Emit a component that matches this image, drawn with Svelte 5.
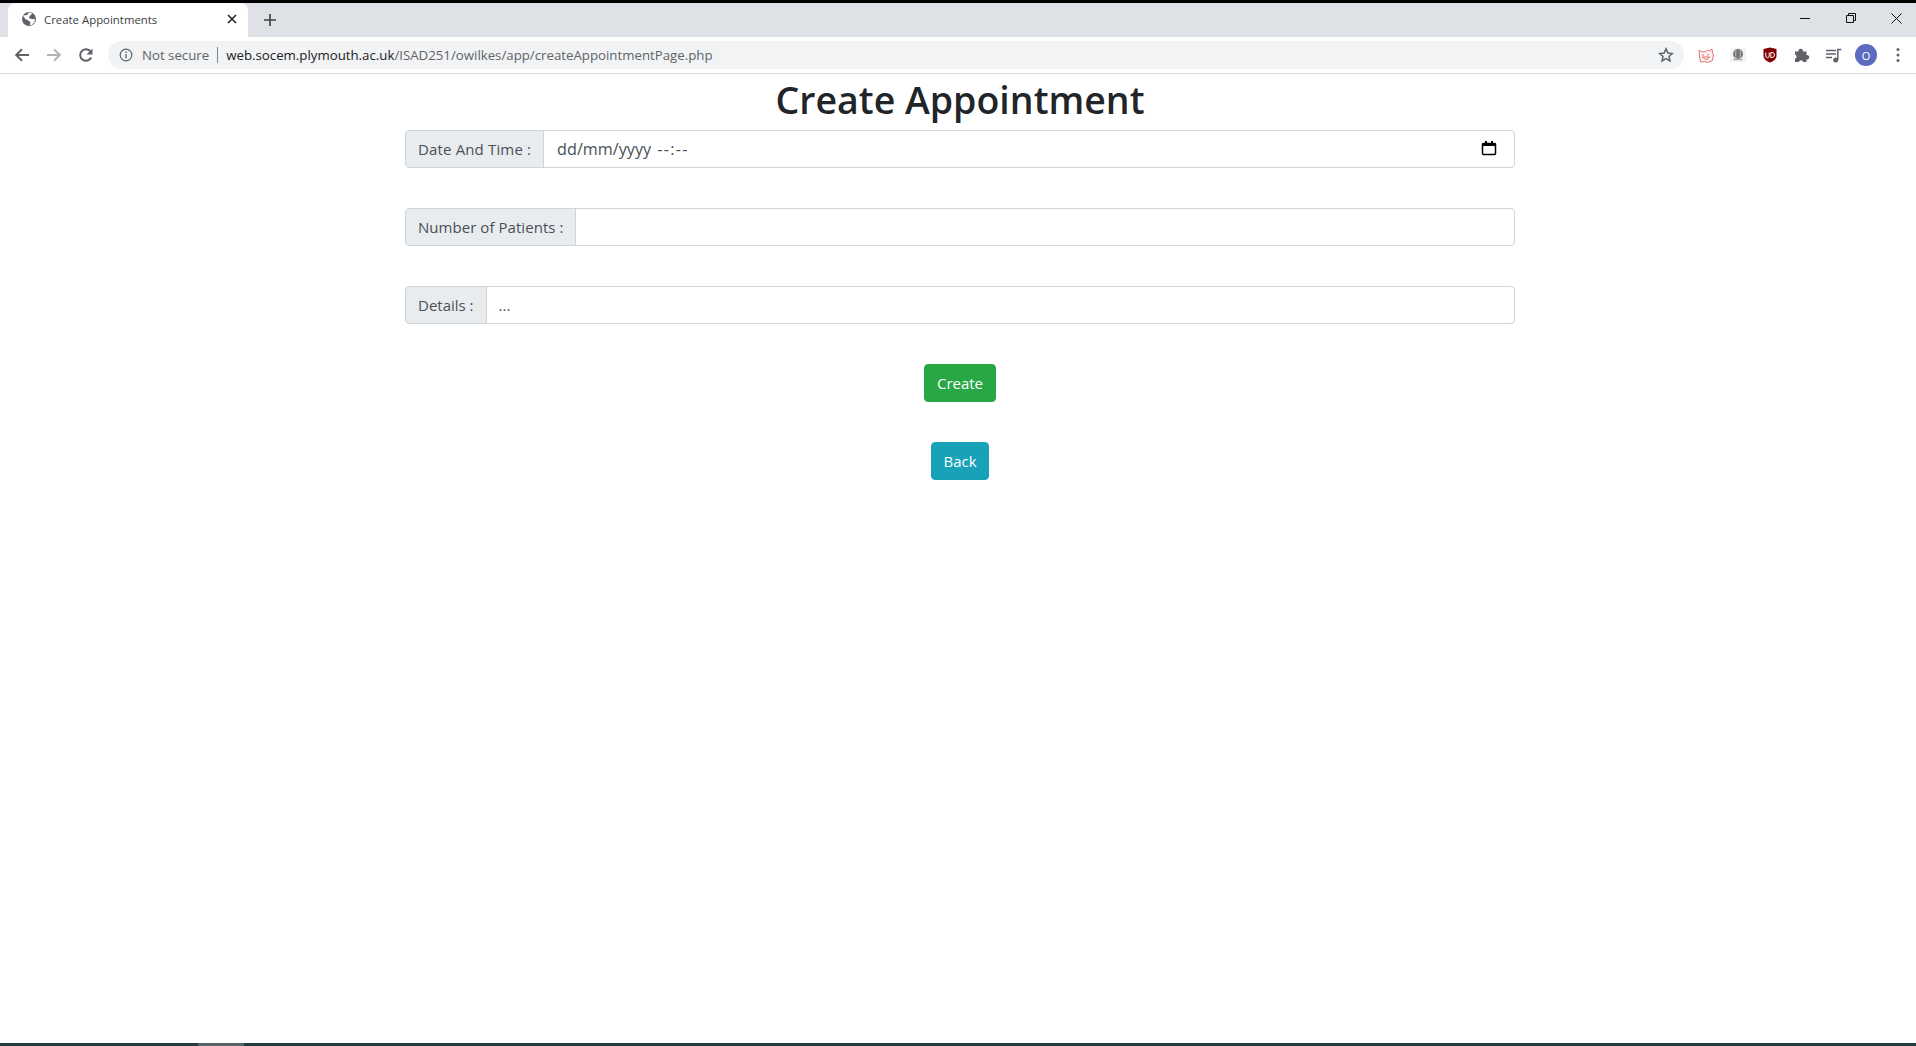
<script>
  const rows = [
    { label: 'Date And Time :', kind: 'date' },
    { label: 'Number of Patients :', kind: 'number' },
    { label: 'Details :', kind: 'details' }
  ];
</script>

<div class="screen">
  <header class="chrome">
    <div class="tabbar">
      <div class="tab">
        <svg class="favicon" viewBox="0 0 16 16" width="16" height="16"><circle cx="8" cy="8" r="7" fill="#5f6368"/><path d="M2 4.500 6.500 4 7.500 1.500l3.500.4L10 4 8.500 5l-.5 2 2.500 1 3.500.3-.5 3-2.500 2.500-2 .5.500-3-2.500-2-2.500-1z" fill="#fff"/></svg>
        <span class="tabtitle">Create Appointments</span>
        <svg class="tabclose" viewBox="0 0 10 10" width="10" height="10"><path d="M1 1l8 8M9 1l-8 8" stroke="#202124" stroke-width="1.600"/></svg>
      </div>
      <svg class="newtab" viewBox="0 0 12 12" width="12" height="12"><path d="M6 0v12M0 6h12" stroke="#3c4043" stroke-width="1.600"/></svg>
      <div class="winctl">
        <svg class="min" viewBox="0 0 10 10" width="10" height="10"><path d="M0 5.500h10" stroke="#111" stroke-width="1"/></svg>
        <svg viewBox="0 0 10 10" width="10" height="10"><path d="M.5 2.500h7v7h-7zM2.500 2.500v-2h7v7h-2" fill="none" stroke="#111" stroke-width="1"/></svg>
        <svg viewBox="0 0 11 11" width="11" height="11"><path d="M.5.500l10 10M10.500.500l-10 10" stroke="#111" stroke-width="1"/></svg>
      </div>
    </div>
    <div class="toolbar">
      <div class="navs">
        <svg viewBox="0 0 16 16" width="16" height="16"><path d="M15 8H2.500M8 2.200 2.200 8 8 13.800" fill="none" stroke="#5f6368" stroke-width="2"/></svg>
        <svg viewBox="0 0 16 16" width="16" height="16"><path d="M1 8h12.500M8 2.200 13.800 8 8 13.800" fill="none" stroke="#b0b3b8" stroke-width="2"/></svg>
        <svg viewBox="0 0 16 16" width="16" height="16"><path d="M13.200 10.500A5.800 5.800 0 1 1 12.200 4" fill="none" stroke="#5f6368" stroke-width="2"/><path d="M14.500 1.500v6h-6z" fill="#5f6368"/></svg>
      </div>
      <div class="omnibox">
        <svg class="info" viewBox="0 0 14 14" width="14" height="14"><circle cx="7" cy="7" r="5.800" fill="none" stroke="#5f6368" stroke-width="1.200"/><path d="M7 6v4.200M7 3.600v1.400" stroke="#5f6368" stroke-width="1.300"/></svg>
        <span class="secure">Not secure</span>
        <span class="sep"></span>
        <span class="url"><b>web.socem.plymouth.ac.uk</b>/ISAD251/owilkes/app/createAppointmentPage.php</span>
        <svg class="star" viewBox="0 0 16 16" width="16" height="16"><path d="M8 1.800l1.900 4.200 4.500.5-3.400 3 1 4.500L8 11.700 4 14l1-4.500-3.400-3 4.500-.5z" fill="none" stroke="#5f6368" stroke-width="1.500"/></svg>
      </div>
      <div class="exts">
        <svg viewBox="0 0 16 16" width="16" height="16"><path d="M1 3.500 5 5l3-.5L9.500 3l1.500 1 3-2 .5 4.500 1 .5-1 6.500-5 2-3-1-4 .5L1.500 9z" fill="#fdf0f0" stroke="#e57373" stroke-width="1"/><path d="M4 7.500l2 1M11 7l-2 1.500M4 10h8M5 10c1 3 5 3 6.500 0" fill="none" stroke="#e57373" stroke-width="1"/></svg>
        <svg viewBox="0 0 16 16" width="16" height="16"><rect y="1" width="16" height="14" fill="#f4f4f4"/><circle cx="8" cy="7" r="5" fill="#757575"/><path d="M6 2.500c-.5 3-.5 6 0 9M10 2.500c.5 3 .5 6 0 9" stroke="#bbb" stroke-width="1" fill="none"/><path d="M3.500 12.500h9" stroke="#aaa" stroke-width="1.500"/></svg>
        <svg viewBox="0 0 16 16" width="16" height="16"><path d="M1.500 2 8 .5 14.500 2v7c0 3-3.200 5.300-6.500 6.500C4.700 14.300 1.500 12 1.500 9z" fill="#800000"/><path d="M3.800 5.500V9a1.700 1.700 0 0 0 3.400 0V5.500M8.800 10.500v-5H10a2.500 2.500 0 0 1 0 5z" fill="none" stroke="#fff" stroke-width="1"/></svg>
        <svg viewBox="0 0 16 16" width="16" height="16"><path d="M1 4.500h3.500a2.300 2.300 0 1 1 4.500 0h3.500V8a2.300 2.300 0 1 1 0 4.500V15H9.200a2.300 2.300 0 0 0-4.400 0H1v-3.200a2.300 2.300 0 0 0 0-4.400z" fill="#5f6368"/></svg>
        <svg viewBox="0 0 16 16" width="16" height="16"><path d="M0 3.500h10M0 7h10M0 10.500h6" stroke="#5f6368" stroke-width="1.300"/><path d="M11.800 13V2.500h3.500" fill="none" stroke="#5f6368" stroke-width="1.500"/><circle cx="9.700" cy="13" r="2.500" fill="#5f6368"/></svg>
        <span class="avatar">O</span>
        <svg class="dots" viewBox="0 0 4 16" width="4" height="16"><circle cx="2" cy="2.500" r="1.500" fill="#5f6368"/><circle cx="2" cy="8" r="1.500" fill="#5f6368"/><circle cx="2" cy="13.500" r="1.500" fill="#5f6368"/></svg>
      </div>
    </div>
  </header>

  <main class="page">
    <h1>Create Appointment</h1>
    <div class="container">
      {#each rows as row}
        <div class="group">
          <span class="addon {row.kind}">{row.label}</span>
          <div class="control">
            {#if row.kind === 'date'}
              <span class="datetext"><span>dd/mm/yyyy</span><span class="time">--:--</span></span>
              <svg class="calendar" viewBox="0 0 16 16" width="16" height="16"><path d="M2.500 3.500h11a1 1 0 0 1 1 1v9a1 1 0 0 1-1 1h-11a1 1 0 0 1-1-1v-9a1 1 0 0 1 1-1z" fill="none" stroke="#000" stroke-width="1.500"/><path d="M1.500 3h13v3h-13zM4 1h2v3H4zM10 1h2v3h-2z" fill="#000"/></svg>
            {:else if row.kind === 'details'}
              <span class="ellipsis">...</span>
            {/if}
          </div>
        </div>
      {/each}
      <button class="btn green">Create</button>
      <button class="btn teal">Back</button>
    </div>
  </main>

  <footer class="taskbar"><span class="active"></span></footer>
</div>

<style>
  :global(body) { margin: 0; background: #fff; }
  .screen {
    height: 1046px;
    display: flex;
    flex-direction: column;
    overflow: hidden;
    font-family: "Open Sans", "Noto Sans", "Liberation Sans", sans-serif;
    color: #212529;
    background: #fff;
  }
  .chrome { flex: none; border-top: 3px solid #000; border-bottom: 1px solid #d9dbdf; }
  .tabbar { height: 34px; background: #dee1e6; display: flex; align-items: stretch; padding-left: 8px; }
  .tab {
    width: 240px;
    box-sizing: border-box;
    background: #fff;
    border-radius: 8px 8px 0 0;
    display: flex;
    align-items: center;
    padding: 0 11px 2px 13px;
    gap: 5px;
  }
  .tabtitle { flex: 1; font-size: 11.400px; color: #3c4043; padding-left: 2px; }
  .newtab { align-self: center; margin-left: 16px; }
  .winctl { margin-left: auto; display: flex; align-items: center; gap: 35px; padding: 0 14px 4px 0; }
  .min { margin-right: 1px; }
  .toolbar { height: 36px; display: flex; align-items: center; background: #fff; }
  .navs { display: flex; gap: 16px; padding-left: 14px; width: 94px; box-sizing: border-box; flex: none; }
  .omnibox {
    width: 1576px;
    flex: none;
    height: 28px;
    background: #f1f3f4;
    border-radius: 14px;
    margin-left: 14px;
    display: flex;
    align-items: center;
    box-sizing: border-box;
    padding-left: 11px;
  }
  .secure { color: #5f6368; margin-left: 9px; font-size: 13.250px; }
  .sep { width: 1px; height: 16px; background: #80868b; margin: 0 8px; }
  .url { color: #5f6368; font-size: 13.250px; white-space: nowrap; }
  .url b { color: #202124; font-weight: 400; }
  .star { margin-left: auto; margin-right: 10px; }
  .exts { display: flex; align-items: center; gap: 16px; padding-left: 14px; }
  .avatar {
    width: 22px; height: 22px; margin: 0 -3px;
    border-radius: 50%;
    background: #5c6bc0;
    color: #fff;
    font-size: 11px;
    display: flex; align-items: center; justify-content: center;
  }
  .dots { margin-left: 6px; }
  .page { flex: 1; display: flex; flex-direction: column; align-items: center; padding-left: 4px; }
  h1 {
    margin: 0 0 6px;
    padding-top: 2px;
    font-size: 37.500px;
    line-height: 48px;
    font-weight: 600;
    color: #212529;
  }
  .container { width: 1110px; display: flex; flex-direction: column; align-items: center; gap: 40px; }
  .group { width: 100%; height: 38px; display: flex; font-size: 15px; }
  .addon {
    flex: none;
    box-sizing: border-box;
    display: flex; align-items: center;
    padding: 0 12px;
    color: #495057;
    background: #e9ecef;
    border: 1px solid #ced4da;
    border-radius: 4px 0 0 4px;
    white-space: nowrap;
  }
  .addon.date { letter-spacing: 0.15px; }
  .addon.number { letter-spacing: 0.05px; }
  .control {
    flex: 1;
    box-sizing: border-box;
    display: flex; align-items: center; justify-content: space-between;
    padding: 0 17px 0 12px;
    margin-left: -1px;
    border: 1px solid #ced4da;
    border-radius: 0 4px 4px 0;
    color: #495057;
  }
  .datetext { display: flex; gap: 6px; font-size: 16.200px; padding-left: 1px; }
  .time { letter-spacing: 1.300px; }
  .calendar { margin-top: -2px; }
  .ellipsis { font-size: 15px; }
  .btn {
    height: 38px;
    padding: 0 12px;
    box-sizing: border-box;
    border: 1px solid;
    border-radius: 4px;
    font: inherit;
    font-size: 15px;
    color: #fff;
  }
  .green { background: #28a745; border-color: #28a745; }
  .teal { background: #17a2b8; border-color: #17a2b8; padding: 0 11.500px; }
  .taskbar { flex: none; height: 3px; background: #263a40; padding-left: 198px; }
  .active { display: block; width: 46px; height: 3px; background: #56656a; }
</style>
